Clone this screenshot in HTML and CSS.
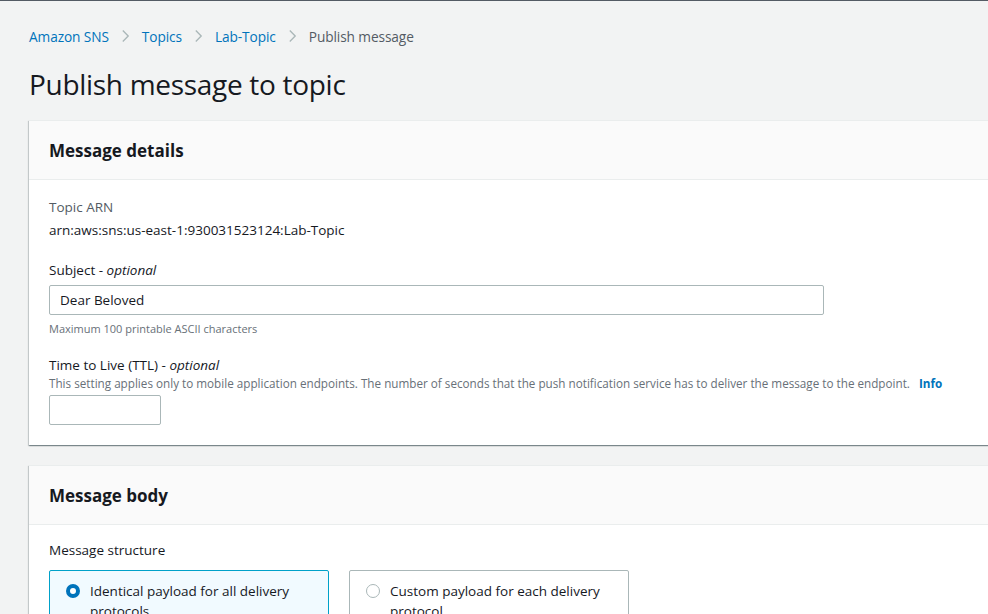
FILE: index.html
```html
<!DOCTYPE html>
<html>
<head>
<meta charset="utf-8">
<link rel="stylesheet" href="styles.css">
</head>
<body>
<div class="page">
  <nav class="crumbs">
    <a class="crumb-link">Amazon SNS</a>
    <svg class="chev" viewBox="0 0 10 16" width="10" height="16"><path d="M2 2l6 6-6 6" fill="none" stroke="#aab7b8" stroke-width="1.5"/></svg>
    <a class="crumb-link">Topics</a>
    <svg class="chev" viewBox="0 0 10 16" width="10" height="16"><path d="M2 2l6 6-6 6" fill="none" stroke="#aab7b8" stroke-width="1.5"/></svg>
    <a class="crumb-link">Lab-Topic</a>
    <svg class="chev" viewBox="0 0 10 16" width="10" height="16"><path d="M2 2l6 6-6 6" fill="none" stroke="#aab7b8" stroke-width="1.5"/></svg>
    <span class="crumb-current">Publish message</span>
  </nav>
  <h1 class="title">Publish message to topic</h1>

  <section class="card">
    <div class="card-head"><h2>Message details</h2></div>
    <div class="card-body">
      <div class="field">
        <div class="label muted">Topic ARN</div>
        <div class="value">arn:aws:sns:us-east-1:930031523124:Lab-Topic</div>
      </div>
      <div class="field tight">
        <div class="label">Subject - <i>optional</i></div>
        <div class="input wide">Dear Beloved</div>
        <div class="hint">Maximum 100 printable ASCII characters</div>
      </div>
      <div class="field last">
        <div class="label">Time to Live (TTL) - <i>optional</i></div>
        <div class="desc">This setting applies only to mobile application endpoints. The number of seconds that the push notification service has to deliver the message to the endpoint. <b class="info">Info</b></div>
        <div class="input small"></div>
      </div>
    </div>
  </section>

  <section class="card">
    <div class="card-head"><h2>Message body</h2></div>
    <div class="card-body body2">
      <div class="label">Message structure</div>
      <div class="tiles">
        <div class="tile selected">
          <span class="radio on"></span>
          <span class="tile-text">Identical payload for all delivery protocols</span>
        </div>
        <div class="tile">
          <span class="radio"></span>
          <span class="tile-text">Custom payload for each delivery protocol</span>
        </div>
      </div>
    </div>
  </section>
</div>
</body>
</html>
```
FILE: styles.css
```css
* { box-sizing: border-box; }
html, body { margin: 0; padding: 0; }
body {
  background: #f2f3f3;
  font-family: "Open Sans", "Noto Sans", Arial, sans-serif;
  color: #16191f;
  border-top: 1px solid #545b64;
  overflow: hidden;
  height: 614px;
}
.page { padding: 0 0 0 29px; }
.crumbs {
  display: flex;
  align-items: center;
  gap: 12px;
  height: 16px;
  margin-top: 27px;
  font-size: 13.7px;
  letter-spacing: -0.1px;
}
.crumb-link { color: #0073bb; }
.crumb-current { color: #545b64; }
.chev { flex: none; width: 9px; }
.title {
  margin: 22px 0 0;
  font-size: 28px;
  font-weight: 400;
  line-height: 36px;
  letter-spacing: -0.3px;
}
.card {
  background: #fff;
  margin-top: 18px;
  margin-right: -10px;
  box-shadow: 0 1px 1px 0 rgba(0,28,36,.3), 1px 1px 1px 0 rgba(0,28,36,.15), -1px 1px 1px 0 rgba(0,28,36,.15);
  border-top: 1px solid #eaeded;
}
.card + .card { margin-top: 20px; }
.card-head {
  background: #fafafa;
  border-bottom: 1px solid #eaeded;
  height: 59px;
  padding: 2px 20px 0;
  display: flex;
  align-items: center;
}
.card-head h2 {
  margin: 0;
  font-size: 17px;
  font-weight: 700;
  line-height: 22px;
}
.card-body { padding: 17px 20px 20px; }
.card-body.body2 { padding-top: 15px; }
.field { margin-bottom: 20px; }
.field.tight { margin-bottom: 18px; }
.field.last { margin-bottom: 0; }
.label { font-size: 13.5px; line-height: 20px; }
.label.muted { color: #545b64; }
.value { font-size: 13.5px; line-height: 20px; margin-top: 3px; }
.input {
  border: 1px solid #aab7b8;
  border-radius: 2px;
  height: 30px;
  background: #fff;
  font-size: 13.5px;
  line-height: 28px;
  padding: 0 10px;
  margin-top: 5px;
}
.input.wide { width: 775px; }
.input.small { width: 112px; margin-top: 4px; }
.hint { font-size: 11px; line-height: 16px; color: #687078; margin-top: 6px; }
.desc { font-size: 11.7px; line-height: 16px; color: #687078; margin-top: 0; }
.info { color: #0073bb; margin-left: 6px; font-weight: 700; }
.tiles { display: flex; gap: 20px; margin-top: 10px; }
.tile {
  width: 280px;
  height: 60px;
  border: 1px solid #aab7b8;
  border-radius: 2px;
  padding: 10px 14px 0 16px;
  display: flex;
  align-items: flex-start;
  gap: 10px;
  font-size: 13.5px;
  line-height: 20px;
}
.tile.selected { background: #f1faff; border-color: #00a1c9; }
.radio {
  flex: none;
  width: 14px;
  height: 14px;
  border-radius: 50%;
  border: 1px solid #aab7b8;
  margin-top: 3px;
  background: #fff;
}
.radio.on { border: 4px solid #0073bb; }
```
